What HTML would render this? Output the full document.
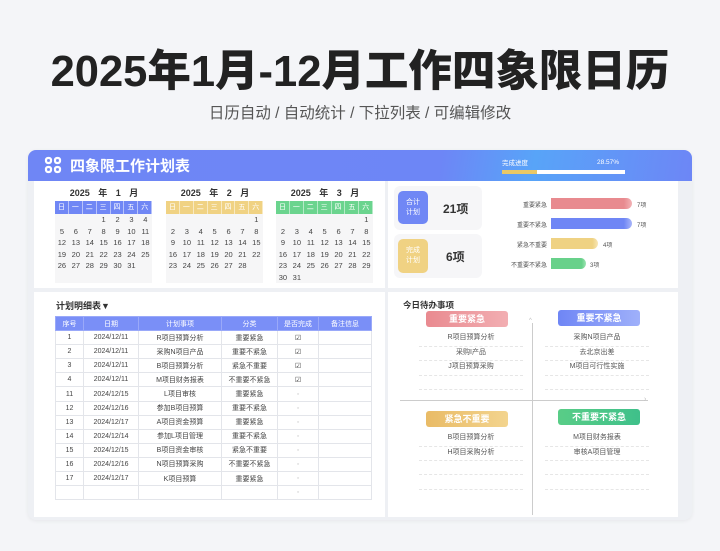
<!DOCTYPE html>
<html><head><meta charset="utf-8"><style>
*{margin:0;padding:0;box-sizing:border-box}
body{width:720px;height:551px;background:#f4f5f8;font-family:"Liberation Sans","Noto Sans CJK SC",sans-serif;position:relative;overflow:hidden;color:#333}
.a{position:absolute}
.t{white-space:nowrap}
.title{left:0;width:720px;top:36px;text-align:center;font-size:43.5px;font-weight:900;color:#222}
.sub{left:0;width:720px;top:101px;text-align:center;font-size:15.5px;color:#555}
.card{left:28px;top:150px;width:664px;height:370px;background:#eef0f4;border-radius:8px;overflow:hidden;box-shadow:0 1px 4px rgba(0,0,0,.06)}
.hdr{left:0;top:0;width:664px;height:31px;background:linear-gradient(100deg,#6f86f5 0%,#6d86f6 62%,#58a4f8 76%,#6d86f6 100%)}
.panel{background:#fff}
.cal{font-size:7.5px;color:#444}
.cal .mh{position:absolute;top:-15px;width:98px;text-align:center;font-size:9px;font-weight:bold;color:#333;word-spacing:6px}
.cal .hd{position:absolute;top:0;height:13px;display:flex}
.cal .hd span{width:13.9px;height:13px;color:#fff;text-align:center;line-height:13px;border-right:1px solid rgba(255,255,255,.5);font-size:7px}
.cal .bd{position:absolute;top:13px;width:97px;height:69px;background:#f6f6f7}
table{border-collapse:collapse;font-size:7px;color:#444}
td,th{border:1px solid #e3e5ea;text-align:center;height:14.1px;padding:0}
th{background:#7a8ff7;color:#fff;font-weight:normal;border-color:#9aa9f9}
.badge{width:82px;height:16px;border-radius:3px;color:#fff;font-size:9px;font-weight:bold;text-align:center;line-height:16px}
.it{width:104px;text-align:center;font-size:7px;color:#555;height:14.5px;line-height:12px;border-bottom:1px dashed #e6e6e6}
.bar{height:11px;border-radius:0 6px 6px 0}
.bl{font-size:6px;color:#555;text-align:right;width:60px}
</style></head><body>
<div class="a t title">2025年1月-12月工作四象限日历</div>
<div class="a t sub">日历自动 / 自动统计 / 下拉列表 / 可编辑修改</div>
<div class="a card">
 <div class="a hdr"></div>
 <svg class="a" style="left:16px;top:6px" width="18" height="18" viewBox="0 0 18 18" fill="none" stroke="#fff" stroke-width="2.2"><rect x="2" y="2" width="5" height="5" rx="2"/><rect x="11" y="2" width="5" height="5" rx="2"/><rect x="2" y="11" width="5" height="5" rx="2"/><rect x="11" y="11" width="5" height="5" rx="2"/></svg>
 <div class="a t" style="left:42px;top:5px;font-size:15px;font-weight:bold;color:#fff">四象限工作计划表</div>
 <div class="a t" style="left:474px;top:7px;font-size:6.5px;color:#fff">完成进度</div>
 <div class="a t" style="left:569px;top:9px;font-size:6.5px;color:#fff">28.57%</div>
 <div class="a" style="left:474px;top:20px;width:123px;height:4px;background:#fff"><div style="width:35px;height:4px;background:#e9c866"></div></div>
 <div class="a panel" style="left:6px;top:31px;width:351px;height:107px"></div>
 <div class="a panel" style="left:360px;top:31px;width:290px;height:107px"></div>
 <div class="a panel" style="left:6px;top:142px;width:351px;height:225px"></div>
 <div class="a panel" style="left:360px;top:142px;width:290px;height:225px"></div>
</div>

<div class="a cal" style="left:55px;top:201px">
 <div class="mh" style="left:0">2025 年 1 月</div>
 <div class="hd" style="left:0;background:#7087f5"><span>日</span><span>一</span><span>二</span><span>三</span><span>四</span><span>五</span><span>六</span></div>
 <div class="bd" style="left:0"></div>
</div>
<div class="a cal" style="left:166px;top:201px">
 <div class="mh" style="left:0">2025 年 2 月</div>
 <div class="hd" style="left:0;background:#f0d283"><span>日</span><span>一</span><span>二</span><span>三</span><span>四</span><span>五</span><span>六</span></div>
 <div class="bd" style="left:0"></div>
</div>
<div class="a cal" style="left:276px;top:201px">
 <div class="mh" style="left:0">2025 年 3 月</div>
 <div class="hd" style="left:0;background:#6bd48e"><span>日</span><span>一</span><span>二</span><span>三</span><span>四</span><span>五</span><span>六</span></div>
 <div class="bd" style="left:0"></div>
</div>
<div id="days"></div>
<script>
(function(){
 var cals=[[55,3,31],[166,6,28],[276,6,31]],h='';
 cals.forEach(function(c){
  for(var d=1;d<=c[2];d++){var p=c[1]+d-1,col=p%7,row=Math.floor(p/7);
   h+='<div class="a" style="left:'+(c[0]+col*13.9)+'px;top:'+(215+row*11.5)+'px;width:13.9px;text-align:center;font-size:7.5px;color:#444">'+d+'</div>';}
 });
 document.getElementById('days').innerHTML=h;
})();
</script>

<div class="a" style="left:394px;top:186px;width:88px;height:44px;background:#f6f6f8;border-radius:6px"></div>
<div class="a" style="left:398px;top:191px;width:30px;height:33px;background:#7087f5;border-radius:5px;color:#fff;font-size:7px;text-align:center;padding-top:7px;line-height:10px">合计<br>计划</div>
<div class="a t" style="left:443px;top:200px;font-size:12px;font-weight:bold;color:#333">21项</div>
<div class="a" style="left:394px;top:234px;width:88px;height:44px;background:#f6f6f8;border-radius:6px"></div>
<div class="a" style="left:398px;top:239px;width:30px;height:34px;background:#f0d283;border-radius:5px;color:#fff;font-size:7px;text-align:center;padding-top:7px;line-height:10px">完成<br>计划</div>
<div class="a t" style="left:446px;top:248px;font-size:12px;font-weight:bold;color:#333">6项</div>

<div class="a bl t" style="left:487px;top:200px">重要紧急</div>
<div class="a bar" style="left:551px;top:198px;width:81px;background:linear-gradient(90deg,#e88a8f 90%,#f2b3b6)"></div>
<div class="a t" style="left:637px;top:200px;font-size:6px;color:#555">7项</div>
<div class="a bl t" style="left:487px;top:220px">重要不紧急</div>
<div class="a bar" style="left:551px;top:218px;width:81px;background:linear-gradient(90deg,#6f86f5 90%,#a9b6f9)"></div>
<div class="a t" style="left:637px;top:220px;font-size:6px;color:#555">7项</div>
<div class="a bl t" style="left:487px;top:240px">紧急不重要</div>
<div class="a bar" style="left:551px;top:238px;width:47px;background:linear-gradient(90deg,#efd283 88%,#f7e6b5)"></div>
<div class="a t" style="left:603px;top:240px;font-size:6px;color:#555">4项</div>
<div class="a bl t" style="left:487px;top:260px">不重要不紧急</div>
<div class="a bar" style="left:551px;top:258px;width:35px;background:linear-gradient(90deg,#68d18a 88%,#9de4b3)"></div>
<div class="a t" style="left:590px;top:260px;font-size:6px;color:#555">3项</div>

<div class="a t" style="left:56px;top:299px;font-size:9px;font-weight:bold;color:#333">计划明细表▼</div>
<table class="a" style="left:55px;top:316px;width:317px">
<tr style="height:13px"><th style="width:28px">序号</th><th style="width:55px">日期</th><th style="width:83px">计划事项</th><th style="width:56px">分类</th><th style="width:41px">是否完成</th><th>备注信息</th></tr>
<tr><td>1</td><td>2024/12/11</td><td>R项目预算分析</td><td>重要紧急</td><td>☑</td><td></td></tr>
<tr><td>2</td><td>2024/12/11</td><td>采购N项目产品</td><td>重要不紧急</td><td>☑</td><td></td></tr>
<tr><td>3</td><td>2024/12/11</td><td>B项目预算分析</td><td>紧急不重要</td><td>☑</td><td></td></tr>
<tr><td>4</td><td>2024/12/11</td><td>M项目财务报表</td><td>不重要不紧急</td><td>☑</td><td></td></tr>
<tr><td>11</td><td>2024/12/15</td><td>L项目审核</td><td>重要紧急</td><td style="color:#ccc">▫</td><td></td></tr>
<tr><td>12</td><td>2024/12/16</td><td>参加B项目预算</td><td>重要不紧急</td><td style="color:#ccc">▫</td><td></td></tr>
<tr><td>13</td><td>2024/12/17</td><td>A项目资金预算</td><td>重要紧急</td><td style="color:#ccc">▫</td><td></td></tr>
<tr><td>14</td><td>2024/12/14</td><td>参加L项目管理</td><td>重要不紧急</td><td style="color:#ccc">▫</td><td></td></tr>
<tr><td>15</td><td>2024/12/15</td><td>B项目资金审核</td><td>紧急不重要</td><td style="color:#ccc">▫</td><td></td></tr>
<tr><td>16</td><td>2024/12/16</td><td>N项目预算采购</td><td>不重要不紧急</td><td style="color:#ccc">▫</td><td></td></tr>
<tr><td>17</td><td>2024/12/17</td><td>K项目预算</td><td>重要紧急</td><td style="color:#ccc">▫</td><td></td></tr>
<tr><td></td><td></td><td></td><td></td><td style="color:#ccc">▫</td><td></td></tr>
</table>

<div class="a t" style="left:403px;top:299px;font-size:8.5px;font-weight:bold;color:#333">今日待办事项</div>
<div class="a" style="left:532px;top:323px;width:1px;height:192px;background:#ccc"></div>
<div class="a t" style="left:529px;top:318px;font-size:6px;color:#bbb">^</div>
<div class="a" style="left:400px;top:400px;width:248px;height:1px;background:#ccc"></div>
<div class="a t" style="left:644px;top:396px;font-size:7px;color:#bbb">›</div>

<div class="a badge" style="left:426px;top:311px;background:linear-gradient(90deg,#e98a90,#f2aeb2)">重要紧急</div>
<div class="a badge" style="left:558px;top:310px;background:linear-gradient(90deg,#6f86f5,#9fb0fa)">重要不紧急</div>
<div class="a badge" style="left:426px;top:411px;background:linear-gradient(90deg,#e9bb66,#f3d48e)">紧急不重要</div>
<div class="a badge" style="left:558px;top:409px;background:linear-gradient(90deg,#59cd87,#3fc08a)">不重要不紧急</div>

<div class="a" style="left:419px;top:332px">
 <div class="it">R项目预算分析</div><div class="it">采购I产品</div><div class="it">J项目预算采购</div><div class="it"></div>
</div>
<div class="a" style="left:545px;top:332px">
 <div class="it">采购N项目产品</div><div class="it">去北京出差</div><div class="it">M项目可行性实施</div><div class="it"></div>
</div>
<div class="a" style="left:419px;top:432px">
 <div class="it">B项目预算分析</div><div class="it">H项目采购分析</div><div class="it" style="height:14px"></div><div class="it"></div>
</div>
<div class="a" style="left:545px;top:432px">
 <div class="it">M项目财务报表</div><div class="it">审核A项目管理</div><div class="it" style="height:14px"></div><div class="it"></div>
</div>
</body></html>
